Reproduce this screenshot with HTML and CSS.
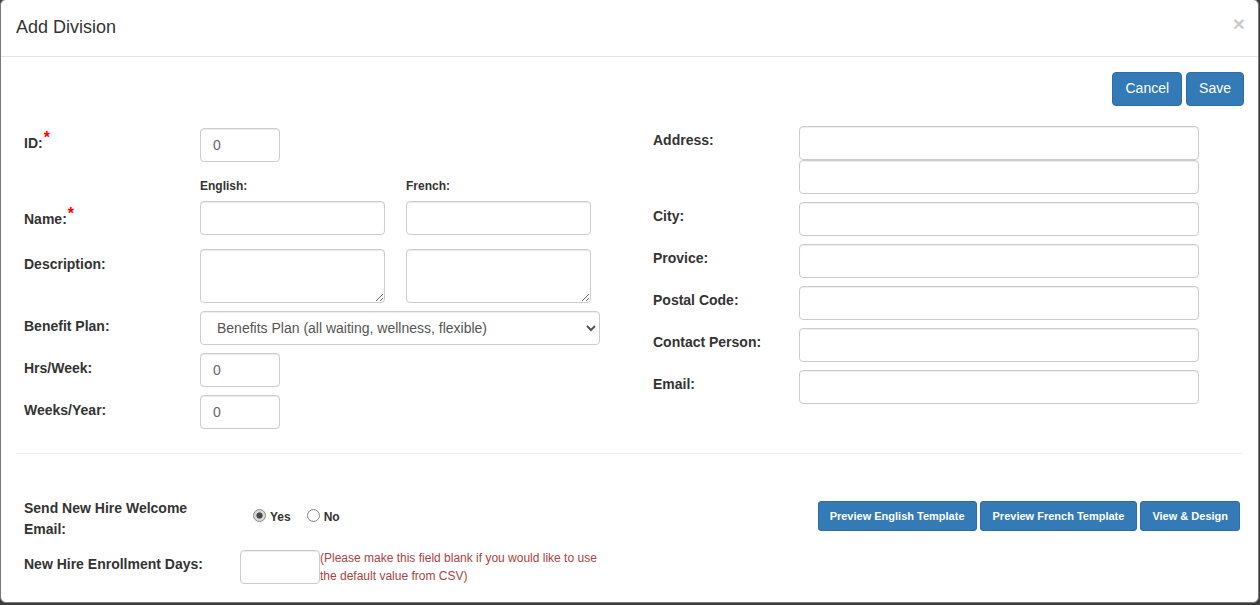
FILE: index.html
```html
<!DOCTYPE html>
<html lang="en">
<head>
<meta charset="utf-8">
<title>Add Division</title>
<link rel="stylesheet" href="styles.css">
</head>
<body>
<div class="modal">
  <div class="modal-header">
    <h4 class="modal-title">Add Division</h4>
    <button class="close" type="button">&times;</button>
  </div>
  <div class="modal-body">
    <div class="actions">
      <button class="btn" type="button">Cancel</button>
      <button class="btn" type="button">Save</button>
    </div>

    <div class="columns">
      <div class="col col-left">
        <div class="row row-id">
          <label class="lbl">ID:<span class="req">*</span></label>
          <input class="fc w-num" type="text" value="0">
        </div>
        <div class="row row-lang">
          <span class="lbl"></span>
          <span class="sub sub-en">English:</span>
          <span class="sub">French:</span>
        </div>
        <div class="row row-name">
          <label class="lbl lbl-name">Name:<span class="req">*</span></label>
          <input class="fc w-half" type="text">
          <input class="fc w-half gap-l" type="text">
        </div>
        <div class="row row-desc">
          <label class="lbl">Description:</label>
          <textarea class="fc w-half ta"></textarea>
          <textarea class="fc w-half ta gap-l"></textarea>
        </div>
        <div class="row row-std">
          <label class="lbl">Benefit Plan:</label>
          <select class="fc w-select">
            <option>Benefits Plan (all waiting, wellness, flexible)</option>
          </select>
        </div>
        <div class="row row-std">
          <label class="lbl">Hrs/Week:</label>
          <input class="fc w-num" type="text" value="0">
        </div>
        <div class="row">
          <label class="lbl">Weeks/Year:</label>
          <input class="fc w-num" type="text" value="0">
        </div>
      </div>

      <div class="col col-right">
        <div class="row row-std">
          <label class="lbl lbl-r">Address:</label>
          <div class="stack">
            <input class="fc w-wide" type="text">
            <input class="fc w-wide" type="text">
          </div>
        </div>
        <div class="row row-std">
          <label class="lbl lbl-r">City:</label>
          <input class="fc w-wide" type="text">
        </div>
        <div class="row row-std">
          <label class="lbl lbl-r">Provice:</label>
          <input class="fc w-wide" type="text">
        </div>
        <div class="row row-std">
          <label class="lbl lbl-r">Postal Code:</label>
          <input class="fc w-wide" type="text">
        </div>
        <div class="row row-std">
          <label class="lbl lbl-r">Contact Person:</label>
          <input class="fc w-wide" type="text">
        </div>
        <div class="row">
          <label class="lbl lbl-r">Email:</label>
          <input class="fc w-wide" type="text">
        </div>
      </div>
    </div>

    <hr class="divider">

    <div class="bottom">
      <div class="brow brow-1">
        <label class="blbl blbl-wrap">Send New Hire Welcome Email:</label>
        <div class="radios">
          <input class="radio" type="radio" name="welcome" checked>
          <span class="rtext">Yes</span>
          <input class="radio radio-no" type="radio" name="welcome">
          <span class="rtext">No</span>
        </div>
        <div class="tpl-btns">
          <button class="btn btn-sm" type="button">Preview English Template</button>
          <button class="btn btn-sm btn-fr" type="button">Preview French Template</button>
          <button class="btn btn-sm" type="button">View &amp; Design</button>
        </div>
      </div>
      <div class="brow brow-2">
        <label class="blbl blbl-single">New Hire Enrollment Days:</label>
        <input class="fc w-days" type="text">
        <span class="note">(Please make this field blank if you would like to use the default value from CSV)</span>
      </div>
    </div>
  </div>
</div>
</body>
</html>
```

FILE: styles.css
```css
* { box-sizing: border-box; }

html, body {
  margin: 0;
  padding: 0;
}

body {
  background: #3d3d3d;
  font-family: "Liberation Sans", Arial, Helvetica, sans-serif;
  font-size: 14px;
  line-height: 1.42857;
  color: #333;
  height: 605px;
  overflow: hidden;
}

.modal {
  width: 1259px;
  height: 604px;
  margin-top: -1px;
  background: #fff;
  border: 1px solid #7a7a7a;
  border-radius: 6px;
  overflow: hidden;
}

.modal-header {
  display: flex;
  justify-content: space-between;
  align-items: flex-start;
  padding: 15px;
  border-bottom: 1px solid #e5e5e5;
}

.modal-title {
  margin: 0;
  font-size: 18px;
  font-weight: normal;
  line-height: 1.42857;
  color: #333;
}

.close {
  margin: -2px -2px 0 0;
  padding: 0;
  border: 0;
  background: transparent;
  font-family: inherit;
  font-size: 21px;
  font-weight: bold;
  line-height: 1;
  color: #000;
  opacity: 0.2;
  text-shadow: 0 1px 0 #fff;
}

.modal-body {
  padding: 15px 15px 18px;
}

.actions {
  display: flex;
  justify-content: flex-end;
  gap: 4px;
  margin-right: -1px;
}

.btn {
  display: inline-block;
  padding: 6px 12px;
  font-family: inherit;
  font-size: 14px;
  line-height: 1.42857;
  color: #fff;
  background: #337ab7;
  border: 1px solid #2e6da4;
  border-radius: 4px;
  white-space: nowrap;
}

.btn-sm {
  padding: 5px 11px;
  font-size: 11px;
  font-weight: bold;
  line-height: 18px;
  border-radius: 3px;
}

.btn-fr { padding: 5px 12px; }

.columns {
  display: grid;
  grid-template-columns: 613px 1fr;
}

.col-left {
  padding: 22px 0 0 8px;
}

.col-right {
  padding: 20px 0 0 24px;
}

.row {
  display: flex;
  align-items: flex-start;
}

.row-std { margin-bottom: 8px; }
.row-id { margin-bottom: 16px; }
.row-lang { margin-bottom: 6px; height: 17px; }
.row-name { margin-bottom: 14px; }
.row-desc { margin-bottom: 8px; }

.lbl {
  flex: 0 0 176px;
  padding-top: 5px;
  font-weight: bold;
  font-size: 14px;
  line-height: 20px;
  color: #333;
}

.lbl-name { padding-top: 8px; }

.lbl-r {
  flex-basis: 146px;
  padding-top: 4px;
}

.req {
  color: #f00;
  font-size: 16px;
  font-weight: bold;
  position: relative;
  top: -5px;
  line-height: 0;
  margin-left: 1px;
}

.sub {
  font-size: 12px;
  font-weight: bold;
  line-height: 17px;
  color: #333;
}

.sub-en { width: 206px; }

.fc {
  display: block;
  height: 34px;
  padding: 6px 12px;
  font-family: inherit;
  font-size: 14px;
  line-height: 1.42857;
  color: #555;
  background: #fff;
  border: 1px solid #ccc;
  border-radius: 4px;
  box-shadow: inset 0 1px 1px rgba(0, 0, 0, 0.075);
  margin: 0;
}

input.fc { color: #666; }

.w-num { width: 80px; }
.w-half { width: 185px; }
.gap-l { margin-left: 21px; }
.ta { height: 54px; resize: both; }
.w-select { width: 400px; padding-left: 12px; color: #555; }
.w-wide { width: 400px; }
.w-days { width: 80px; }

.stack {
  display: flex;
  flex-direction: column;
}

.divider {
  margin: 24px 0 0;
  border: 0;
  border-top: 1px solid #eee;
  height: 0;
}

.bottom {
  margin-top: 44px;
  padding-left: 8px;
}

.brow {
  display: flex;
  align-items: flex-start;
}

.brow-1 { margin-bottom: 10px; }

.blbl {
  flex: 0 0 201px;
  margin-right: 15px;
  font-weight: bold;
  font-size: 14px;
  color: #333;
}

.blbl-wrap { line-height: 21px; }
.blbl-single { line-height: 20px; margin-top: 4px; }

.radios {
  display: flex;
  align-items: center;
  height: 20px;
  margin-top: 8px;
}

.radio {
  appearance: none;
  -webkit-appearance: none;
  width: 13px;
  height: 13px;
  margin: 0 4px 0 13px;
  border: 1px solid #858585;
  border-radius: 50%;
  background: #fff;
}

.radio:checked {
  background: radial-gradient(circle, #4a4a4a 0, #4a4a4a 2.8px, #d9d9d9 3.4px, #d9d9d9 100%);
  border-color: #8a8a8a;
}

.radio-no { margin-left: 16px; }

.rtext {
  font-size: 12px;
  font-weight: bold;
  line-height: 20px;
  color: #333;
  padding-top: 2px;
}

.tpl-btns {
  display: flex;
  gap: 3px;
  margin-left: auto;
  margin-right: 3px;
  margin-top: 3px;
}

.note {
  width: 282px;
  font-size: 12px;
  line-height: 18px;
  color: #a94442;
  margin-top: -1px;
}
```
